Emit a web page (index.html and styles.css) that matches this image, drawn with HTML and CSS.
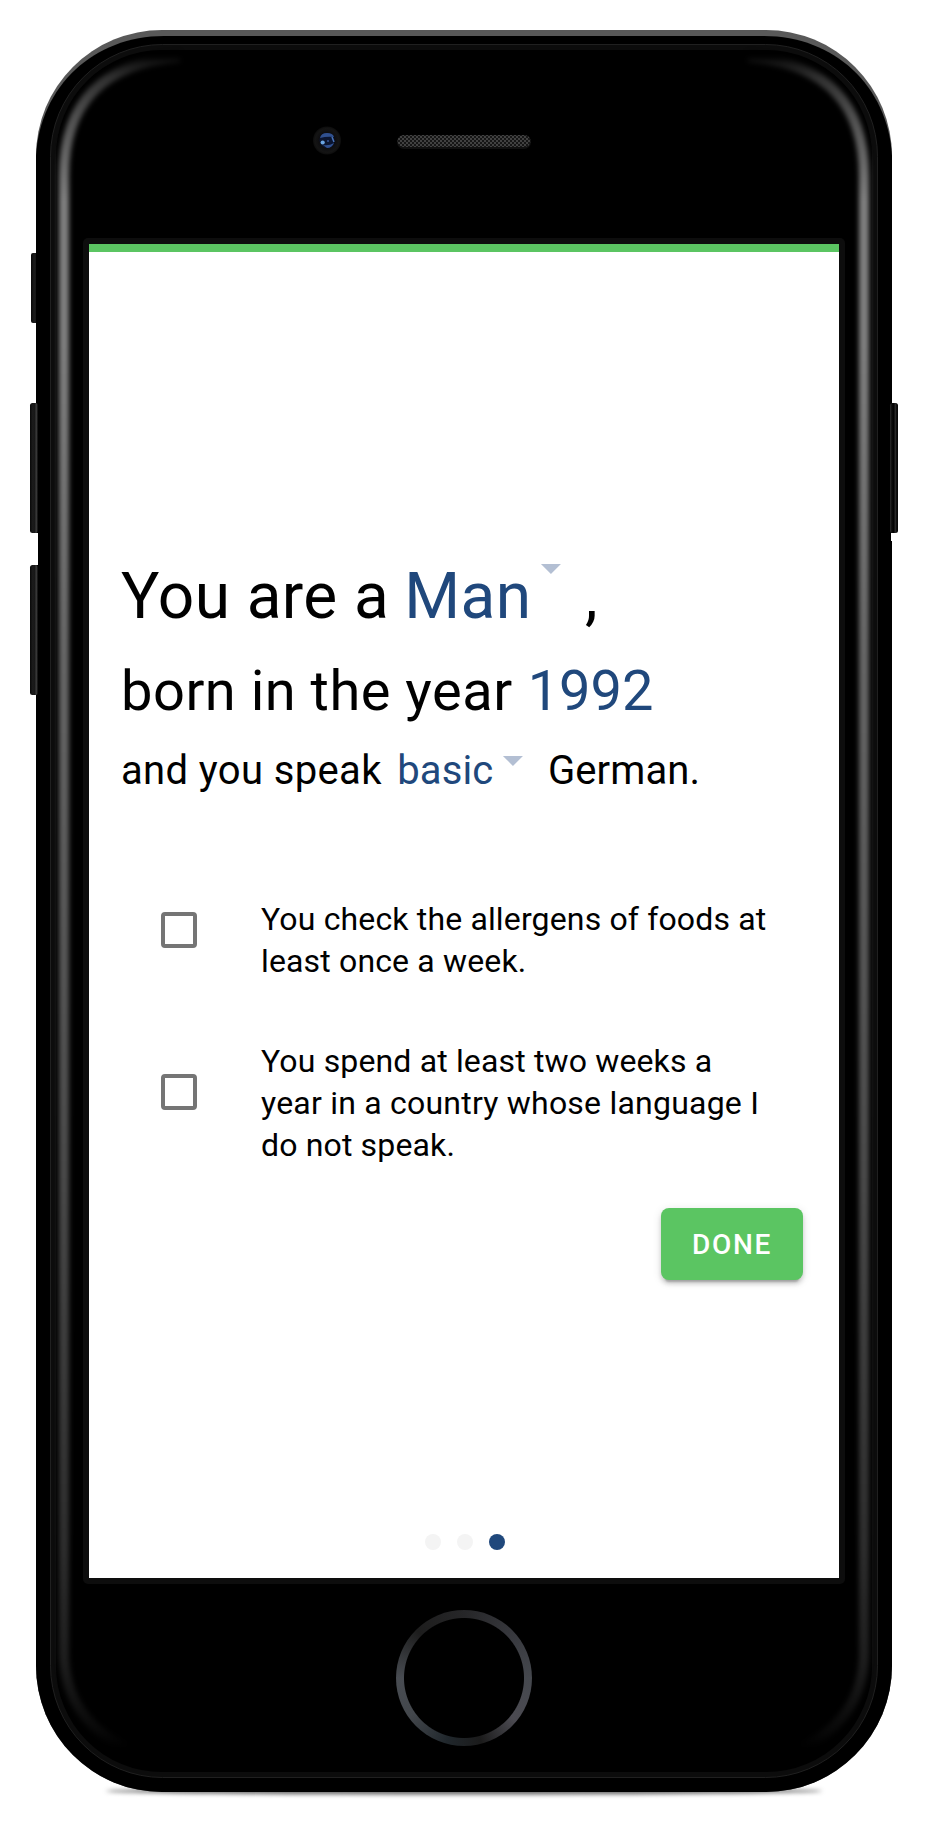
FILE: index.html
```
<!DOCTYPE html>
<html lang="en">
<head>
<meta charset="utf-8">
<title>Profile setup</title>
<link rel="stylesheet" href="styles.css">
</head>
<body>
<div class="stage">
  <svg class="device" viewBox="0 0 928 1824" aria-hidden="true">
    <defs>
      <linearGradient id="fade" x1="0" y1="0" x2="0" y2="1">
        <stop offset="0" stop-color="#000"/>
        <stop offset=".003" stop-color="#141414"/>
        <stop offset=".012" stop-color="#303030"/>
        <stop offset=".035" stop-color="#505050"/>
        <stop offset=".085" stop-color="#808080"/>
        <stop offset=".17" stop-color="#808080"/>
        <stop offset=".35" stop-color="#686868"/>
        <stop offset=".65" stop-color="#4c4c4c"/>
        <stop offset=".88" stop-color="#2e2e2e"/>
        <stop offset=".95" stop-color="#1d1d1d"/>
        <stop offset=".99" stop-color="#080808"/>
        <stop offset="1" stop-color="#000"/>
      </linearGradient>
      <linearGradient id="key" x1="0" x2="1" y1="0" y2="0">
        <stop offset="0" stop-color="#080808"/>
        <stop offset=".35" stop-color="#1c1c1c"/>
        <stop offset=".55" stop-color="#161616"/>
        <stop offset=".8" stop-color="#3a3a3a"/>
        <stop offset="1" stop-color="#080808"/>
      </linearGradient>
      <linearGradient id="power" x1="0" x2="1" y1="0" y2="0">
        <stop offset="0" stop-color="#2c2c2c"/>
        <stop offset=".25" stop-color="#0a0a0a"/>
        <stop offset=".5" stop-color="#000"/>
        <stop offset=".65" stop-color="#303030"/>
        <stop offset=".85" stop-color="#080808"/>
      </linearGradient>
      <radialGradient id="lens"><stop offset="0" stop-color="#070b16"/><stop offset=".5" stop-color="#0c0c0f"/><stop offset=".85" stop-color="#141414"/><stop offset="1" stop-color="#0c0c0c"/></radialGradient>
      <pattern id="mesh" width="4" height="4" patternUnits="userSpaceOnUse">
        <rect width="4" height="4" fill="#161616"/>
        <rect width="2" height="2" fill="#414141"/><rect x="2" y="2" width="2" height="2" fill="#414141"/>
      </pattern>
      <filter id="soft" x="-20%" y="-10%" width="140%" height="120%" color-interpolation-filters="sRGB"><feGaussianBlur stdDeviation="2.8"/></filter>
      <filter id="shade" x="-10%" y="-200%" width="120%" height="500%" color-interpolation-filters="sRGB"><feGaussianBlur stdDeviation="2"/></filter>
      <filter id="tiny" x="-20%" y="-20%" width="140%" height="140%" color-interpolation-filters="sRGB"><feGaussianBlur stdDeviation=".5"/></filter>
    </defs>
    <ellipse cx="464" cy="1791" rx="358" ry="3.5" fill="#666" filter="url(#shade)"/>
    <rect x="31" y="253" width="9" height="70" rx="2" fill="url(#key)"/>
    <rect x="36" y="30" width="856" height="1762" rx="126" fill="#595959"/>
    <path d="M36 156C40 86 94 36 164 36H764C834 36 888 86 892 156V1666A126 126 0 0 1 766 1792H162A126 126 0 0 1 36 1666Z" fill="#000"/>
    <path d="M30 533H38V565H30ZM898 533H891V541H898Z" fill="#fff"/>
    <rect x="30" y="403" width="8" height="130" rx="2.5" fill="url(#key)"/>
    <rect x="30" y="565" width="8" height="130" rx="2.5" fill="url(#key)"/>
    <rect x="890" y="403" width="8" height="130" rx="2.5" fill="url(#power)"/>
    <rect x="50.5" y="44.5" width="827" height="1733" rx="112" fill="#0c0c0c" stroke="#202020"/>
    <rect x="56" y="50" width="816" height="1722" rx="106" fill="#000"/>
    <path d="M180 57Q64 66 64 176V1654Q65 1718 126 1748" fill="none" stroke="url(#fade)" stroke-width="10" filter="url(#soft)"/>
    <path d="M748 57Q864 66 864 176V1654Q863 1718 802 1748" fill="none" stroke="url(#fade)" stroke-width="10" filter="url(#soft)"/>
    <rect x="83" y="238" width="762" height="1346" rx="5" fill="#0d0d0d"/>
    <circle cx="327" cy="140.500" r="14" fill="url(#lens)"/>
    <g filter="url(#tiny)">
      <circle cx="327" cy="140.500" r="7.500" fill="#0b1530"/>
      <path d="M320 138Q321 133 327 133T334 137Q327 136 320 138ZM323 145Q329 146 334 143Q332 148 327 148Z" fill="#30508f"/>
      <circle cx="322.700" cy="142.500" r="2.100" fill="#6ca6e4"/>
      <circle cx="328" cy="141" r="1" fill="#355494"/>
      <path d="M332 137L334 142" stroke="#4974b8" stroke-width="1.500"/>
    </g>
    <rect x="397" y="135" width="134" height="14" rx="7" fill="#101010"/>
    <rect x="397.500" y="135" width="133" height="12" rx="6" fill="url(#mesh)"/>
  </svg>
  <div class="home"></div>
  <main class="screen">
    <div class="progress"></div>
    <section class="intro">
      <p class="line line-gender"><span>You are a</span><span class="choice">Man</span><i class="caret"></i><span class="comma">,</span></p>
      <p class="line line-year"><span class="lead">born in the year</span><span class="choice">1992</span></p>
      <p class="line line-language"><span class="lead">and you speak</span><span class="choice">basic</span><i class="caret"></i><span class="language">German.</span></p>
    </section>
    <label class="option"><span class="box"></span><span class="text">You check the allergens of foods at<br>least once a week.</span></label>
    <label class="option option-travel"><span class="box"></span><span class="text">You spend at least two weeks a<br><span class="wide">year in a country whose language I</span><br>do not speak.</span></label>
    <button class="done">DONE</button>
    <div class="dots"><i class="dot"></i><i class="dot"></i><i class="dot current"></i></div>
  </main>
</div>
</body>
</html>
```
FILE: styles.css
```
* { box-sizing: border-box; }
body { margin: 0; background: #fff; font-family: Roboto, "Liberation Sans", sans-serif; color: #000; }
.stage { display: grid; width: 928px; height: 1824px; overflow: hidden; }
.device, .screen, .home { grid-area: 1 / 1; }
.device { width: 928px; height: 1824px; }
.screen { width: 750px; height: 1334px; margin: 244px 0 0 89px; background: #fff; display: flex; flex-direction: column; }
.progress { height: 8px; background: #5bc562; }
.home {
  width: 136px; height: 136px; margin: 1610px 0 0 396px; border-radius: 50%;
  background:
    radial-gradient(circle, #000 59.5px, transparent 60.5px),
    conic-gradient(#262628, #36373c 45deg, #45484e 90deg, #4b4a51 130deg, #1b1b1b 165deg, #20272c 195deg, #43474c 235deg, #484c52 270deg, #1d1d1d 315deg, #262628);
}
.intro { margin: 304px 0 0 32px; }
.line { margin: 0; display: flex; white-space: nowrap; }
.choice { color: #20487c; }
.caret { width: 20px; height: 10px; background: #b3bfd3; clip-path: polygon(0 0, 100% 0, 50% 100%); }
.line-gender { font-size: 64px; line-height: 82px; height: 95px; letter-spacing: .4px; }
.line-gender .choice { margin-left: 15px; }
.line-gender .caret { margin: 8px 0 0 9.5px; }
.comma { margin-left: 24px; }
.line-year { font-size: 56px; line-height: 80px; height: 89px; }
.line-year .lead { letter-spacing: .5px; }
.line-year .choice { margin-left: 15px; }
.line-language { font-size: 40px; line-height: 62px; height: 60px; letter-spacing: .12px; }
.line-language .lead { letter-spacing: .36px; }
.line-language .choice { margin-left: 15.5px; }
.line-language .caret { margin: 16px 0 0 9.5px; }
.language { margin-left: 25px; }
.option { display: flex; align-items: center; gap: 64px; margin: 98px 0 0 72px; font-size: 32px; line-height: 42px; letter-spacing: .15px; white-space: nowrap; }
.option-travel { margin-top: 58px; }
.wide { letter-spacing: .22px; }
.box { width: 36px; height: 36px; margin-bottom: 20px; border: 4px solid #757575; border-radius: 4px; }
.option-travel .box { margin-bottom: 22px; }
.done {
  align-self: flex-end; width: 142px; height: 72px; margin: 42px 36px 0 0; padding: 0; border: 0; border-radius: 8px;
  background: #5bc562; color: #fff; font: 500 28px/74px Roboto, sans-serif; letter-spacing: 1.7px;
  box-shadow: 0 6px 2px -4px rgba(0,0,0,.2), 0 4px 4px rgba(0,0,0,.14), 0 2px 10px rgba(0,0,0,.12);
}
.dots { display: flex; gap: 16px; margin: auto 0 28px 336px; }
.dot { width: 16px; height: 16px; border-radius: 50%; background: #f4f4f4; }
.current { background: #20487c; }
```
